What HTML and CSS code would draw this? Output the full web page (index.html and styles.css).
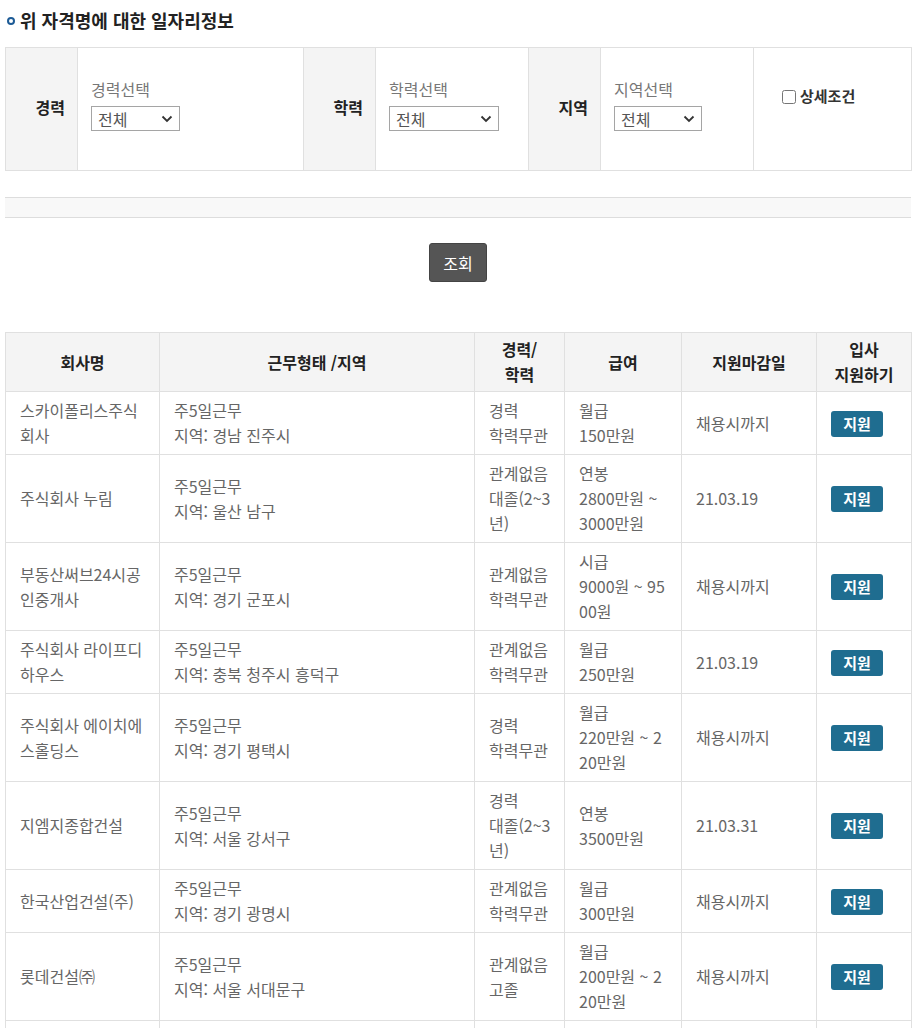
FILE: index.html
```html
<!DOCTYPE html>
<html lang="ko">
<head>
  <meta charset="UTF-8">
  <title>자격명 일자리정보</title>
  <link rel="stylesheet" href="styles.css">
</head>
<body>
  <div class="wrap">
    <h3 class="tit"><span class="dot"></span>위 자격명에 대한 일자리정보</h3>

    <table class="srch">
      <colgroup>
        <col style="width:72px"><col style="width:226px">
        <col style="width:72px"><col style="width:153px">
        <col style="width:72px"><col style="width:153px">
        <col style="width:158px">
      </colgroup>
      <tr>
        <th>경력</th>
        <td>
          <label for="career" class="lbl">경력선택</label>
          <span class="sel sel-career">
            <select id="career">
              <option>전체</option>
              <option>신입</option>
              <option>경력</option>
              <option>관계없음</option>
            </select>
            <svg class="arr" width="12" height="8" viewBox="0 0 12 8"><path d="M1.5 1.5 L6 6 L10.5 1.5" fill="none" stroke="#333" stroke-width="1.8"/></svg>
          </span>
        </td>
        <th>학력</th>
        <td>
          <label for="edu" class="lbl">학력선택</label>
          <span class="sel sel-edu">
            <select id="edu">
              <option>전체</option>
              <option>고졸</option>
              <option>대졸(2~3년)</option>
              <option>대졸(4년)</option>
            </select>
            <svg class="arr" width="12" height="8" viewBox="0 0 12 8"><path d="M1.5 1.5 L6 6 L10.5 1.5" fill="none" stroke="#333" stroke-width="1.8"/></svg>
          </span>
        </td>
        <th>지역</th>
        <td>
          <label for="area" class="lbl">지역선택</label>
          <span class="sel sel-area">
            <select id="area">
              <option>전체</option>
              <option>서울</option>
              <option>경기</option>
            </select>
            <svg class="arr" width="12" height="8" viewBox="0 0 12 8"><path d="M1.5 1.5 L6 6 L10.5 1.5" fill="none" stroke="#333" stroke-width="1.8"/></svg>
          </span>
        </td>
        <td class="detail">
          <label class="chk"><input type="checkbox">상세조건</label>
        </td>
      </tr>
    </table>

    <div class="bar"></div>

    <div class="btn-area">
      <button type="button" class="btn-search">조회</button>
    </div>

    <table class="list">
      <colgroup>
        <col style="width:154px"><col style="width:315px">
        <col style="width:90px"><col style="width:117px">
        <col style="width:135px"><col style="width:95px">
      </colgroup>
      <thead>
        <tr>
          <th>회사명</th>
          <th>근무형태 /지역</th>
          <th>경력/<br>학력</th>
          <th>급여</th>
          <th>지원마감일</th>
          <th>입사<br>지원하기</th>
        </tr>
      </thead>
      <tbody>
        <tr>
          <td>스카이폴리스주식회사</td>
          <td>주5일근무<br>지역: 경남 진주시</td>
          <td class="cond">경력<br>학력무관</td>
          <td>월급<br>150만원</td>
          <td>채용시까지</td>
          <td><a href="#" class="apply">지원</a></td>
        </tr>
        <tr>
          <td>주식회사 누림</td>
          <td>주5일근무<br>지역: 울산 남구</td>
          <td class="cond">관계없음<br>대졸(2~3년)</td>
          <td>연봉<br>2800만원 ~ 3000만원</td>
          <td>21.03.19</td>
          <td><a href="#" class="apply">지원</a></td>
        </tr>
        <tr>
          <td>부동산써브24시공인중개사</td>
          <td>주5일근무<br>지역: 경기 군포시</td>
          <td class="cond">관계없음<br>학력무관</td>
          <td>시급<br>9000원 ~ 9500원</td>
          <td>채용시까지</td>
          <td><a href="#" class="apply">지원</a></td>
        </tr>
        <tr>
          <td>주식회사 라이프디하우스</td>
          <td>주5일근무<br>지역: 충북 청주시 흥덕구</td>
          <td class="cond">관계없음<br>학력무관</td>
          <td>월급<br>250만원</td>
          <td>21.03.19</td>
          <td><a href="#" class="apply">지원</a></td>
        </tr>
        <tr>
          <td>주식회사 에이치에스홀딩스</td>
          <td>주5일근무<br>지역: 경기 평택시</td>
          <td class="cond">경력<br>학력무관</td>
          <td>월급<br>220만원 ~ 220만원</td>
          <td>채용시까지</td>
          <td><a href="#" class="apply">지원</a></td>
        </tr>
        <tr>
          <td>지엠지종합건설</td>
          <td>주5일근무<br>지역: 서울 강서구</td>
          <td class="cond">경력<br>대졸(2~3년)</td>
          <td>연봉<br>3500만원</td>
          <td>21.03.31</td>
          <td><a href="#" class="apply">지원</a></td>
        </tr>
        <tr>
          <td>한국산업건설(주)</td>
          <td>주5일근무<br>지역: 경기 광명시</td>
          <td class="cond">관계없음<br>학력무관</td>
          <td>월급<br>300만원</td>
          <td>채용시까지</td>
          <td><a href="#" class="apply">지원</a></td>
        </tr>
        <tr>
          <td>롯데건설㈜</td>
          <td>주5일근무<br>지역: 서울 서대문구</td>
          <td class="cond">관계없음<br>고졸</td>
          <td>월급<br>200만원 ~ 220만원</td>
          <td>채용시까지</td>
          <td><a href="#" class="apply">지원</a></td>
        </tr>
        <tr>
          <td>주식회사 한길이앤씨</td>
          <td>주5일근무<br>지역: 경기 화성시</td>
          <td class="cond">경력<br>고졸</td>
          <td>월급<br>250만원 ~ 300만원</td>
          <td>채용시까지</td>
          <td><a href="#" class="apply">지원</a></td>
        </tr>
      </tbody>
    </table>
  </div>
</body>
</html>
```

FILE: styles.css
```css
body {
  margin: 0;
  font-family: "Noto Sans CJK KR", sans-serif;
  color: #333;
}

.wrap {
  width: 906px;
  padding: 8px 0 40px 5px;
}

.tit {
  margin: 0 0 15px;
  font-size: 18px;
  line-height: 24px;
  font-weight: bold;
  color: #222;
}

.dot {
  display: inline-block;
  width: 4px;
  height: 4px;
  margin: 0 5px 0 2px;
  border: 2.5px solid #1d5b96;
  border-radius: 50%;
  vertical-align: 3px;
}

/* search box */
.srch {
  width: 906px;
  border-collapse: collapse;
  table-layout: fixed;
}

.srch tr {
  height: 123px;
}

.srch th,
.srch td {
  border: 1px solid #e0e0e0;
}

.srch th {
  background: #f4f4f4;
  text-align: right;
  padding: 0 12px 4px 0;
  font-size: 16px;
  color: #222;
}

.srch td {
  vertical-align: top;
  padding: 30px 0 0 13px;
}

.srch .lbl {
  display: block;
  font-size: 16px;
  line-height: 22px;
  color: #777;
}

.sel {
  position: relative;
  display: inline-block;
  margin-top: 6px;
}

.sel select {
  width: 100%;
  height: 25px;
  padding: 0 0 0 6px;
  font-family: "Noto Sans CJK KR", sans-serif;
  font-size: 16px;
  color: #555;
  background: #fff;
  border: 1px solid #a5a5a5;
  border-radius: 0;
  appearance: none;
  -webkit-appearance: none;
}

.sel .arr {
  position: absolute;
  right: 7px;
  top: 9px;
  pointer-events: none;
}

.sel-career { width: 89px; }
.sel-edu { width: 110px; }
.sel-area { width: 88px; }

.srch .detail {
  padding: 35px 0 0 28px;
}

.chk {
  font-size: 15px;
  line-height: 20px;
  font-weight: bold;
  color: #333;
}

.chk input {
  width: 14px;
  height: 14px;
  margin: 0 4px 0 0;
  vertical-align: -2px;
}

.bar {
  margin-top: 26px;
  height: 19px;
  background: #f8f8f8;
  border-top: 1px solid #ddd;
  border-bottom: 1px solid #ddd;
}

.btn-area {
  margin-top: 25px;
  text-align: center;
}

.btn-search {
  width: 58px;
  height: 39px;
  padding: 0;
  background: #555;
  color: #fff;
  border: 1px solid #444;
  border-radius: 3px;
  font-family: "Noto Sans CJK KR", sans-serif;
  font-size: 16px;
  cursor: pointer;
}

/* result list */
.list {
  width: 906px;
  margin-top: 50px;
  border-collapse: collapse;
  table-layout: fixed;
  font-size: 16px;
  line-height: 25px;
}

.list th,
.list td {
  border: 1px solid #e0e0e0;
}

.list th {
  padding: 4px 6px;
  background: #f4f4f4;
  font-weight: bold;
  color: #222;
  text-align: center;
}

.list td {
  padding: 6px 14px;
  color: #666;
  word-break: break-all;
  vertical-align: middle;
}

.list td.cond {
  padding-right: 9px;
}

.apply {
  display: inline-block;
  width: 52px;
  height: 26px;
  line-height: 26px;
  background: #1f6d90;
  color: #fff;
  font-size: 15px;
  font-weight: bold;
  text-align: center;
  text-decoration: none;
  border-radius: 3px;
  vertical-align: middle;
}
```
